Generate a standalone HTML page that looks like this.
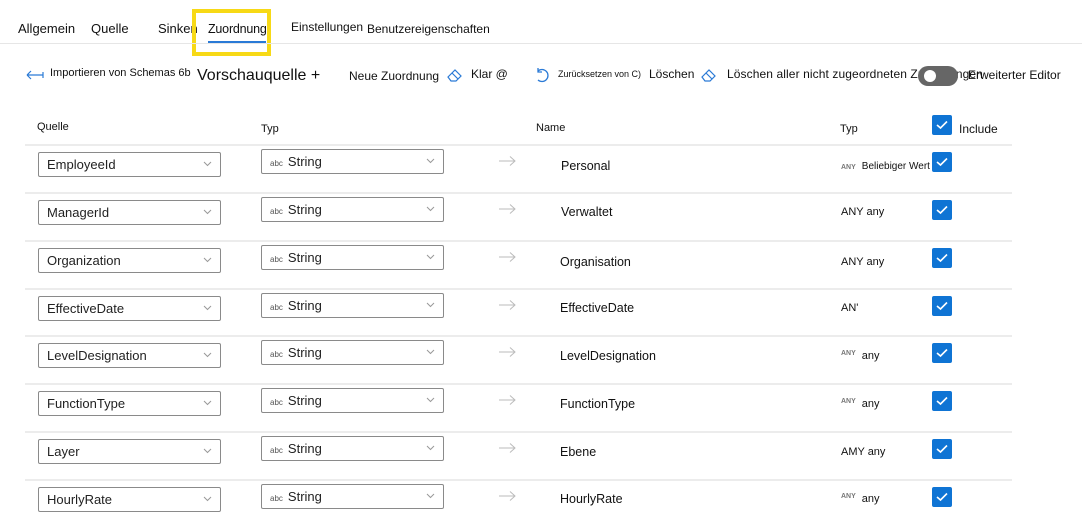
<!DOCTYPE html>
<html><head><meta charset="utf-8"><style>
*{margin:0;padding:0;box-sizing:border-box}
body{width:1082px;height:532px;background:#fff;font-family:"Liberation Sans",Arial,sans-serif;color:#111;position:relative;overflow:hidden;font-size:13px}
.a{position:absolute;white-space:nowrap}
.line{position:absolute;left:25px;width:987px;height:2px;background:#ececec}
.dd{position:absolute;height:25px;border:1px solid #8a8a8a;border-radius:2px;font-size:13px;padding-left:8px;line-height:23px;color:#222}
.dd svg{position:absolute;right:8px;top:8px}
.cb{position:absolute;width:20px;height:20px;background:#0f74d4;border-radius:2px}
.cb svg{position:absolute;left:4px;top:5px}
.tiny{font-size:7px;color:#777;font-weight:bold;margin-right:6px}
</style></head><body>
<div class="a" style="left:18px;top:21px;font-size:13px">Allgemein</div>
<div class="a" style="left:91px;top:21px;font-size:13px">Quelle</div>
<div class="a" style="left:158px;top:21px;font-size:13px">Sinken</div>
<div class="a" style="left:208px;top:22px;font-size:12.5px;letter-spacing:-0.2px">Zuordnung</div>
<div class="a" style="left:291px;top:20px;font-size:12px">Einstellungen</div>
<div class="a" style="left:367px;top:22px;font-size:12px">Benutzereigenschaften</div>
<div class="a" style="left:192px;top:9px;width:79px;height:47px;border:4px solid #f7d916"></div>
<div class="a" style="left:208px;top:41px;width:58px;height:2px;background:#2a7ad6"></div>
<div class="a" style="left:0;top:43px;width:1082px;height:1px;background:#e6e6e6"></div>

<svg class="a" style="left:26px;top:70px" width="18" height="10"><path d="M1 5H17M1 5L5 1M1 5L5 9" stroke="#2a7ad6" stroke-width="1.2" fill="none"/><path d="M17 2V8" stroke="#2a7ad6" stroke-width="1.2"/></svg>
<div class="a" style="left:50px;top:67px;font-size:11px">Importieren von Schemas 6b</div>
<div class="a" style="left:197px;top:67px;font-size:16px">Vorschauquelle +</div>
<div class="a" style="left:349px;top:69px;font-size:12px">Neue Zuordnung</div>
<svg class="a" style="left:446px;top:67px" width="18" height="16"><path d="M2 10L9 3L15 9L10 14H5Z M6 6L12 12" stroke="#2a7ad6" stroke-width="1.2" fill="none"/></svg>
<div class="a" style="left:471px;top:67px;font-size:12px">Klar @</div>
<svg class="a" style="left:535px;top:67px" width="16" height="18"><path d="M3 4A6 6 0 1 1 3 13M3 1V5H7" stroke="#2a7ad6" stroke-width="1.3" fill="none"/></svg>
<div class="a" style="left:558px;top:69px;font-size:9px">Zurücksetzen von C)</div>
<div class="a" style="left:649px;top:67px;font-size:12px">Löschen</div>
<svg class="a" style="left:700px;top:67px" width="20" height="16"><path d="M2 10L9 3L15 9L10 14H5Z M6 6L12 12" stroke="#2a7ad6" stroke-width="1.2" fill="none"/></svg>
<div class="a" style="left:727px;top:67px;font-size:12px;letter-spacing:0.1px">Löschen aller nicht zugeordneten Zuordnungen</div>
<div class="a" style="left:918px;top:66px;width:40px;height:20px;border-radius:10px;background:#666"></div>
<div class="a" style="left:924px;top:70px;width:12px;height:12px;border-radius:6px;background:#fff"></div>
<div class="a" style="left:968px;top:68px;font-size:12px">Erweiterter Editor</div>

<div class="a" style="left:37px;top:121px;font-size:11px">Quelle</div>
<div class="a" style="left:261px;top:123px;font-size:11px">Typ</div>
<div class="a" style="left:536px;top:122px;font-size:11px">Name</div>
<div class="a" style="left:840px;top:123px;font-size:11px">Typ</div>
<div class="cb" style="left:932px;top:115px"><svg width="12" height="10"><path d="M1 5L4.5 8L11 1.5" stroke="#fff" stroke-width="1.6" fill="none"/></svg></div>
<div class="a" style="left:959px;top:122px;font-size:12px">Include</div>

<div id="rows"></div>
<script>
var d=[["EmployeeId","Personal","<span class='tiny'>ANY</span><span style='font-size:10px'>Beliebiger Wert</span>",166],
["ManagerId","Verwaltet","ANY any",212],
["Organization","Organisation","ANY any",262],
["EffectiveDate","EffectiveDate","AN'",308],
["LevelDesignation","LevelDesignation","<span class='tiny' style='vertical-align:4px'>ANY</span>any",356],
["FunctionType","FunctionType","<span class='tiny' style='vertical-align:4px'>ANY</span>any",404],
["Layer","Ebene","AMY any",452],
["HourlyRate","HourlyRate","<span class='tiny' style='vertical-align:4px'>ANY</span>any",499]];
var h="",lines=[144,192,240,288,335,383,431,479];
var chev='<svg width="9" height="6"><path d="M1 1L4.5 4.5L8 1" stroke="#999" fill="none"/></svg>';
for(var i=0;i<8;i++){var L=lines[i];
h+='<div class="line" style="top:'+L+'px"></div>';
h+='<div class="dd" style="left:38px;top:'+(L+8)+'px;width:183px">'+d[i][0]+chev+'</div>';
h+='<div class="dd" style="left:261px;top:'+(L+5)+'px;width:183px"><span style="font-size:8px;color:#555;margin-right:5px">abc</span>String'+chev+'</div>';
h+='<svg class="a" style="left:499px;top:'+(L+12)+'px" width="18" height="10"><path d="M0 5H16M11 0.5L16 5L11 9.5" stroke="#bbb" fill="none"/></svg>';
h+='<div class="a" style="left:'+(i<2?561:560)+'px;top:'+(d[i][3]-7)+'px;font-size:12.5px">'+d[i][1]+'</div>';
h+='<div class="a" style="left:841px;top:'+(d[i][3]-6)+'px;font-size:11px">'+d[i][2]+'</div>';
h+='<div class="cb" style="left:932px;top:'+(L+8)+'px"><svg width="12" height="10"><path d="M1 5L4.5 8L11 1.5" stroke="#fff" stroke-width="1.6" fill="none"/></svg></div>';}
document.getElementById("rows").innerHTML=h;
</script>
</body></html>
